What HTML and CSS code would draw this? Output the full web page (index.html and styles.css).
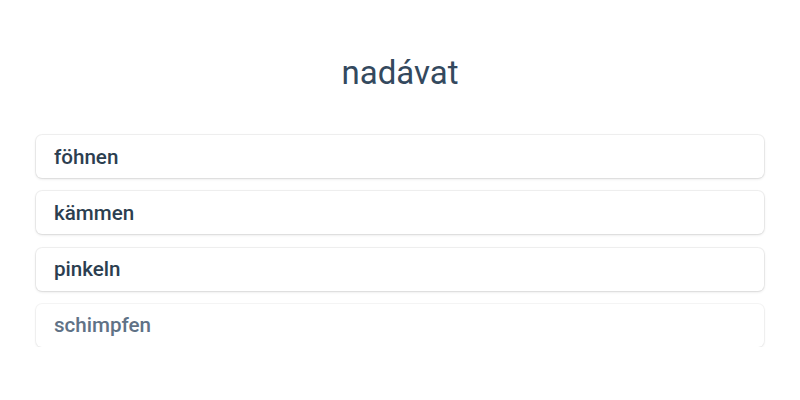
FILE: index.html
```html
<!DOCTYPE html>
<html lang="cs">
<head>
    <meta charset="UTF-8">
    <meta name="viewport" content="width=device-width, initial-scale=1.0">
    <title>nadávat</title>
    <link rel="stylesheet" href="styles.css">
</head>
<body>
    <div class="quiz">
        <h1 class="word">nadávat</h1>
        <div class="options">
            <div class="option">föhnen</div>
            <div class="option">kämmen</div>
            <div class="option">pinkeln</div>
            <div class="option faded">schimpfen</div>
        </div>
    </div>
</body>
</html>
```

FILE: styles.css
```css
body {
    margin: 0;
    font-family: Roboto, "Liberation Sans", sans-serif;
    background: #ffffff;
    color: #2c3e50;
}
.quiz {
    padding: 51px 36px 0;
}
.word {
    margin: 0 0 40px;
    text-align: center;
    font-size: 33px;
    font-weight: 400;
    line-height: 44px;
    color: #34495e;
}
.options {
    display: flex;
    flex-direction: column;
    gap: 13.3px;
}
.option {
    height: 43px;
    box-sizing: border-box;
    padding: 0 18px;
    display: flex;
    align-items: center;
    font-size: 20.6px;
    font-weight: 500;
    background: #fff;
    border-radius: 6px;
    box-shadow: 0 0 0 1px rgba(0, 0, 0, 0.05), 0 1px 3px rgba(0, 0, 0, 0.12);
}
.option.faded {
    color: #607286;
    box-shadow: 0 0 0 1px rgba(0, 0, 0, 0.035), 0 1px 3px rgba(0, 0, 0, 0.08);
}
```
